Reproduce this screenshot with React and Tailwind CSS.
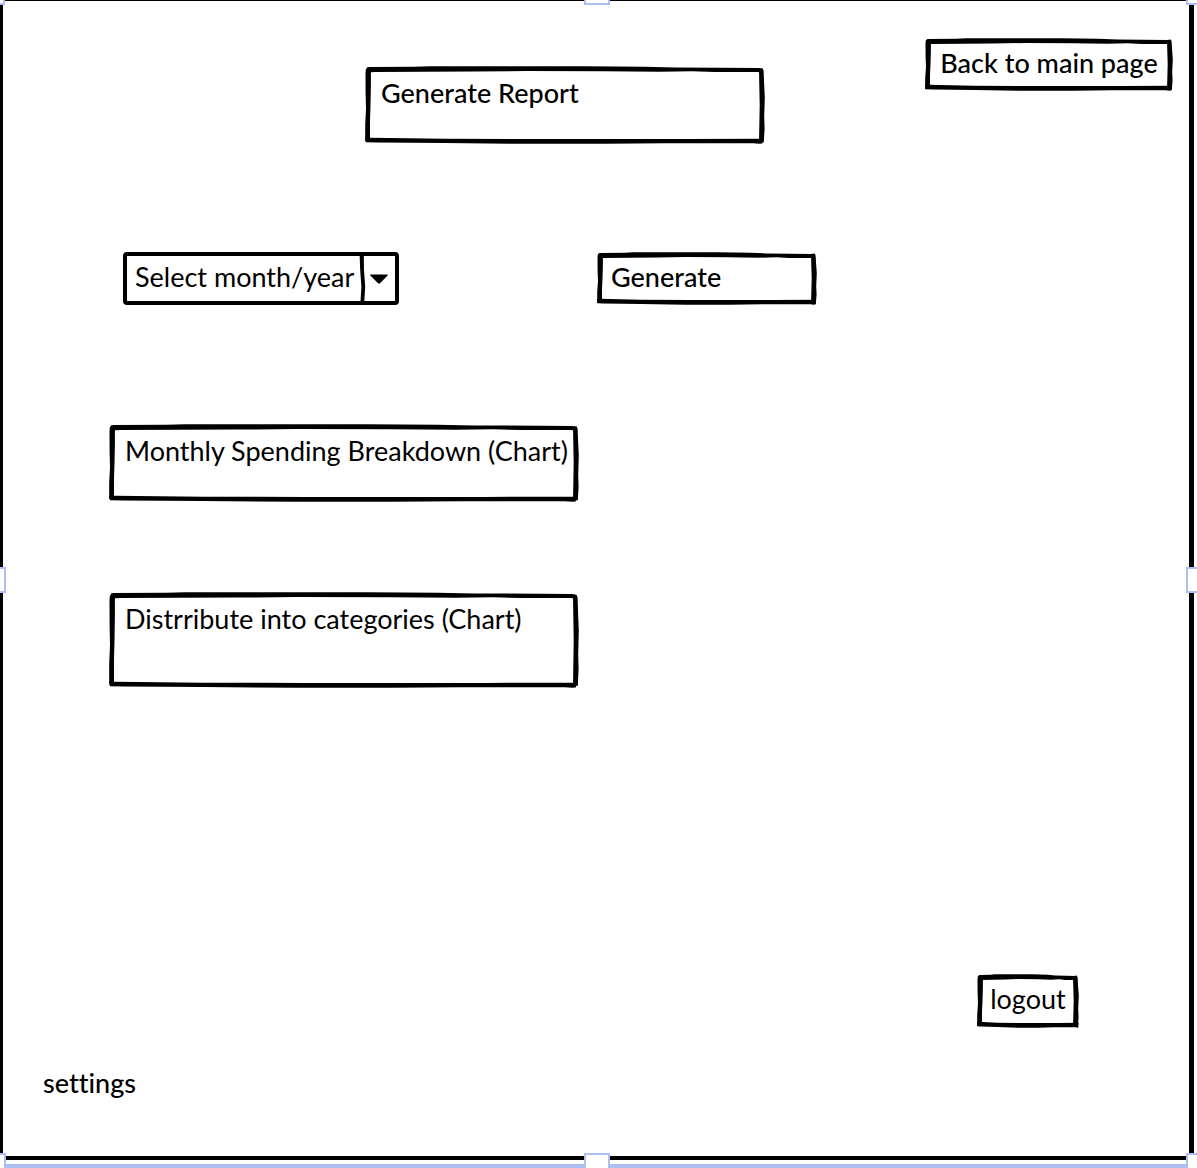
import React from "react";

function SketchFrame() {
  return (
    <span aria-hidden="true" className="pointer-events-none absolute inset-0">
      <svg className="absolute inset-x-0.5 top-0 h-2 w-[calc(100%-4px)]" viewBox="0 0 100 8" preserveAspectRatio="none">
        <path d="M0 1.6 L0.6 1 L12 0.8 L16 0.2 L55 0.2 L70 0.8 L78 1.4 L99 2 L99.7 2.6 L99.7 6.4 L98.5 6 L88 6 L82 5.3 L74 5.7 L60 5.3 L40 5 L27 5.6 L2 5.9 L0 6.4 Z" />
      </svg>
      <svg className="absolute inset-x-0 bottom-0 h-2 w-full" viewBox="0 0 100 8" preserveAspectRatio="none">
        <path d="M0 1.4 L1 1.7 L6 2.1 L20 2.7 L42 3 L80 2.9 L99 2.7 L99.6 2.6 L99.3 7.4 L98.5 7.8 L97 7.2 L75 7.2 L60 7.8 L40 7.8 L20 7 L3 6.4 L0.2 6.2 Z" />
      </svg>
      <svg className="absolute inset-y-0 left-0 h-full w-2" viewBox="0 0 8 100" preserveAspectRatio="none">
        <path d="M2.2 1.8 L0.8 4.5 L0.5 10 L0.6 35 L1 55 L0.2 75 L0.2 96 L5 96 L5 70 L5.5 50 L5.9 25 L5.9 4 Z" />
      </svg>
      <svg className="absolute inset-y-0 right-0 h-full w-2" viewBox="0 0 8 100" preserveAspectRatio="none">
        <path d="M2 4 L5.6 2.8 L6.6 6 L7.2 25 L7.8 40 L7.2 65 L7.6 80 L6.8 98 L2 97 L2.3 78 L2.7 50 L2.3 25 Z" />
      </svg>
    </span>
  );
}

function SelectFrame() {
  return (
    <span aria-hidden="true" className="pointer-events-none absolute inset-0">
      <span className="absolute inset-0 rounded-sm border-4 border-black" />
      <svg className="absolute inset-y-0 right-8 h-full w-2" viewBox="0 0 8 52" preserveAspectRatio="none">
        <path d="M0.6 2 L4.8 2 L5 18 L6.2 34 L5.2 50 L1.4 50 L2.4 34 L1.2 18 Z" />
      </svg>
      <svg className="absolute top-1/2 right-2.5 h-2.5 w-5 -translate-y-1/2" viewBox="0 0 20 10">
        <path d="M1.5 0.4 H18.5 Q19.4 0.6 18.6 1.4 L11 9.2 Q10 10 9 9.2 L1.4 1.4 Q0.6 0.6 1.5 0.4 Z" />
      </svg>
    </span>
  );
}

function Handle({ className }) {
  return <span aria-hidden="true" className={`absolute size-[26px] border-2 border-[#adbff0] bg-white ${className}`} />;
}

export default function App() {
  return (
    <div className="relative flex min-h-screen flex-col overflow-hidden bg-white font-['Lato',sans-serif] text-[27px] leading-8 font-medium text-black [font-variant-ligatures:none]">
      <main className="mr-[3px] flex flex-1 flex-col border-t border-r-[5px] border-b-4 border-l-[3px] border-black">
        <header className="flex items-start justify-between pt-[37px] pr-4 pl-[362px]">
          <h1 className="relative mt-7 h-[78px] w-[400px] px-4 pt-[11px] font-medium">
            <SketchFrame />
            Generate Report
          </h1>
          <button type="button" className="relative h-[53px] w-[248px] pb-1 text-center whitespace-nowrap">
            <SketchFrame />
            Back to main page
          </button>
        </header>

        <form className="mt-[108px] flex items-start pl-[120px]" onSubmit={(e) => e.preventDefault()}>
          <div className="relative h-[53px] w-[276px]">
            <select aria-label="Select month/year" className="h-full w-full appearance-none bg-white pb-1 pl-3 font-normal outline-none">
              <option>Select month/year</option>
            </select>
            <SelectFrame />
          </div>
          <button type="submit" className="relative ml-[198px] h-[53px] w-[220px] pb-1 pl-3.5 text-left">
            <SketchFrame />
            Generate
          </button>
        </form>

        <section className="mt-[119px] flex flex-col gap-[90px] pl-[106px]">
          <h2 className="relative h-[78px] w-[470px] px-4 pt-[11px] font-normal whitespace-nowrap">
            <SketchFrame />
            Monthly Spending Breakdown (Chart)
          </h2>
          <h2 className="relative h-[96px] w-[470px] px-4 pt-[11px] font-normal whitespace-nowrap">
            <SketchFrame />
            Distrribute into categories (Chart)
          </h2>
        </section>

        <footer className="mt-auto flex flex-col pb-[57px]">
          <button type="button" className="relative mr-[110px] h-[54px] w-[102px] self-end pb-1 font-normal">
            <SketchFrame />
            logout
          </button>
          <a href="#settings" className="mt-[39px] ml-10 self-start">settings</a>
        </footer>
      </main>
      <div aria-hidden="true" className="mx-1 mt-1 h-1 bg-[#adbff0]" />

      <Handle className="-top-[21px] -left-[21px]" />
      <Handle className="-top-[21px] left-1/2 -ml-[15px]" />
      <Handle className="-top-[21px] -right-[15px]" />
      <Handle className="top-[567px] -left-5" />
      <Handle className="top-[567px] -right-[15px]" />
      <Handle className="-bottom-[11px] -left-5" />
      <Handle className="-bottom-[11px] left-1/2 -ml-[15px]" />
      <Handle className="-right-[15px] -bottom-[11px]" />
    </div>
  );
}
